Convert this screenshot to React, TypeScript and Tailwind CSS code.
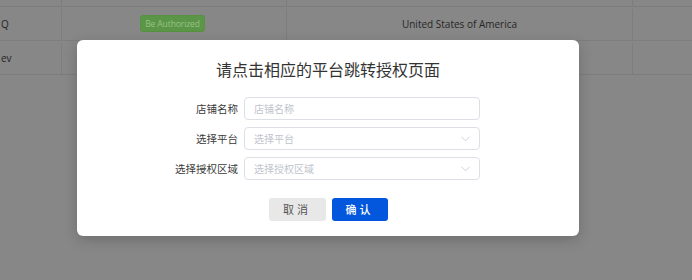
import { useState } from "react";

const rows = [
  { name: "Q", status: "Be Authorized", region: "United States of America" },
  { name: "ev", status: "", region: "" },
];

const Chevron = () => (
  <svg width="9" height="6" viewBox="0 0 9 6" fill="none" className="shrink-0">
    <path d="M0.5 0.8 L4.5 4.8 L8.5 0.8" stroke="#c8cbd1" strokeWidth="0.9" />
  </svg>
);

const Field = ({ label, placeholder, select }: { label: string; placeholder: string; select?: boolean }) => (
  <div className="flex items-center gap-[6px]">
    <label className="w-[161px] text-right text-[10.5px] text-[#3a3a3a]">{label}</label>
    <div className="flex h-[23px] w-[236px] items-center justify-between rounded-[4px] border border-[#dcdfe6] bg-white pl-[9px] pr-[9px]">
      <span className="text-[10px] text-[#c0c4cc]">{placeholder}</span>
      {select && <Chevron />}
    </div>
  </div>
);

export default function App() {
  const [open] = useState(true);

  return (
    <div
      className="relative h-[280px] w-[692px] overflow-hidden bg-[#878787]"
      style={{ fontFamily: '"Open Sans", "Noto Sans CJK SC", sans-serif' }}
    >
      {/* table behind the mask */}
      <div className="flex flex-col">
        <div className="grid h-[7px] grid-cols-[62px_225px_346px_59px] border-b border-[#7d7d7d]">
          <div className="border-r border-[#7d7d7d]" />
          <div className="border-r border-[#7d7d7d]" />
          <div className="border-r border-[#7d7d7d]" />
          <div />
        </div>
        {rows.map((r) => (
          <div
            key={r.name}
            className="grid h-[34px] grid-cols-[62px_225px_346px_59px] border-b border-[#7d7d7d] pt-[2px] text-[10px] text-[#262626]"
          >
            <div className="flex items-center border-r border-[#7d7d7d] pl-[1px]">{r.name}</div>
            <div className="flex items-center justify-center border-r border-[#7d7d7d] pb-[2px] pr-[3px]">
              {r.status && (
                <span className="rounded-[3px] border border-[#57903f] bg-[#5b9547] px-[4px] text-[8.5px] leading-[15px] tracking-[-0.1px] text-[#97c286]">
                  {r.status}
                </span>
              )}
            </div>
            <div className="flex items-center justify-center border-r border-[#7d7d7d]">{r.region}</div>
            <div />
          </div>
        ))}
      </div>

      {open && (
        <div className="absolute left-[77px] top-[40px] flex h-[196px] w-[502px] flex-col items-center rounded-[6px] bg-white pt-[16px] shadow-[0_4px_14px_rgba(0,0,0,0.18)]">
          <h2 className="text-[16px] leading-[26px] text-[#333]" style={{ fontFamily: '"Noto Sans CJK SC", sans-serif' }}>
            请点击相应的平台跳转授权页面
          </h2>
          <div
            className="mt-[15px] flex w-full flex-col gap-[7px]"
            style={{ fontFamily: '"Noto Sans CJK SC", sans-serif' }}
          >
            <Field label="店铺名称" placeholder="店铺名称" />
            <Field label="选择平台" placeholder="选择平台" select />
            <Field label="选择授权区域" placeholder="选择授权区域" select />
          </div>
          <div className="mt-[18px] flex gap-[6px]" style={{ fontFamily: '"Noto Sans CJK SC", sans-serif' }}>
            <button className="h-[23px] w-[57px] rounded-[3px] bg-[#e8e8e8] text-[11px] tracking-[3px] text-[#555]">
              取消
            </button>
            <button className="h-[23px] w-[56px] rounded-[3px] bg-[#0257dd] text-[11px] font-medium tracking-[3px] text-white">
              确认
            </button>
          </div>
        </div>
      )}
    </div>
  );
}
